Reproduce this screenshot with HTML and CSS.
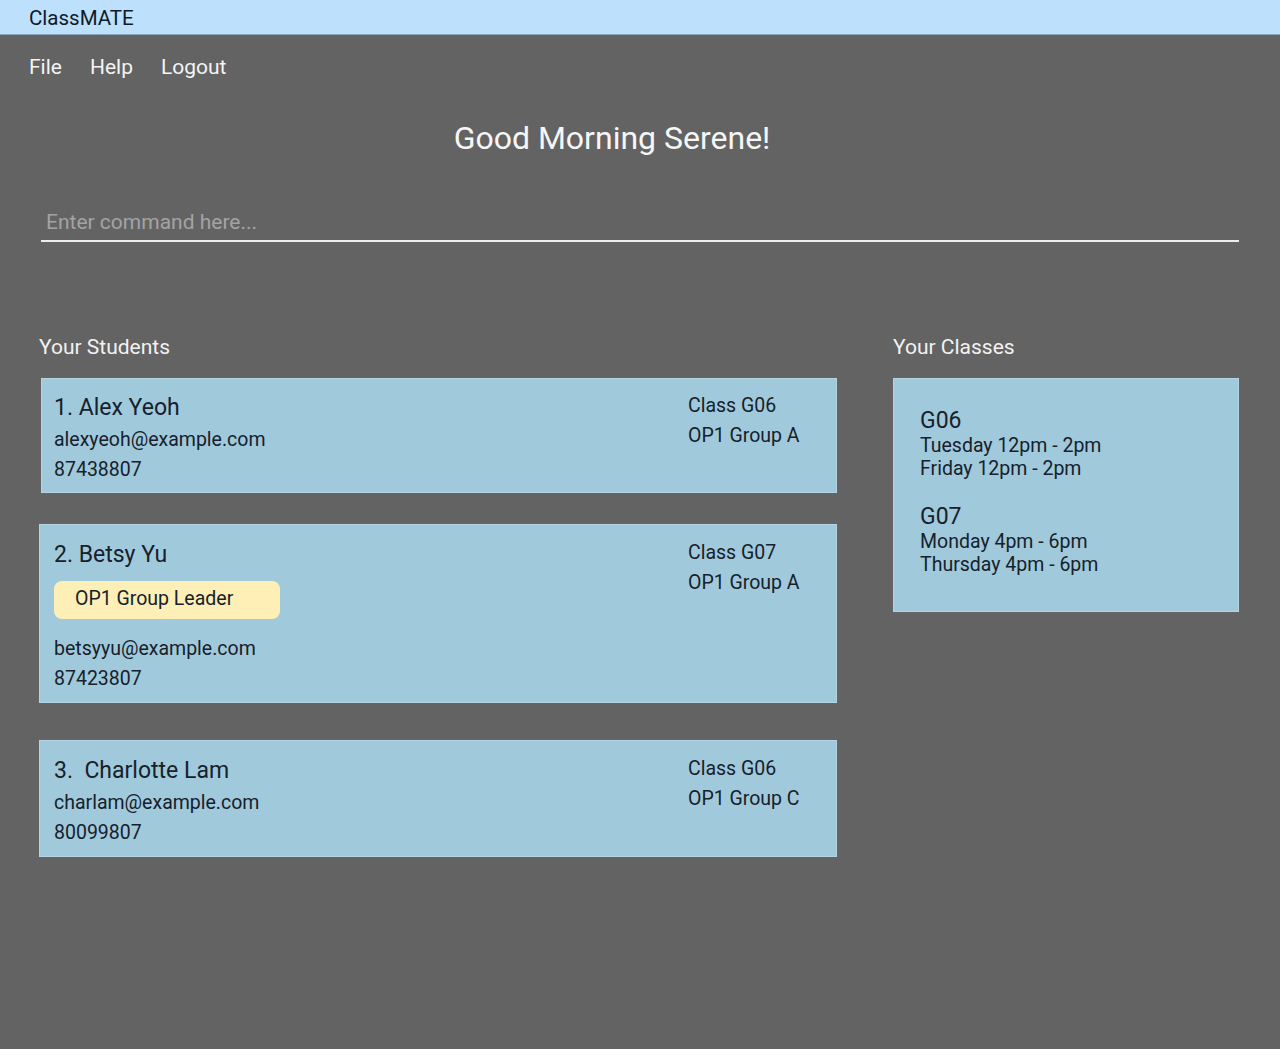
FILE: index.html
```html
<!DOCTYPE html>
<html>
<head>
    <title>ClassMATE</title>
    <meta charset="utf-8">
    <link rel="stylesheet" href="styles.css">
</head>
<body>
    <div class="title-bar">ClassMATE</div>

    <div class="menu">
        <span class="menu-item">File</span>
        <span class="menu-item">Help</span>
        <span class="menu-item">Logout</span>
    </div>

    <h1 class="greeting">Good Morning Serene!</h1>

    <div class="command-box">
        <input class="command-input" type="text" placeholder="Enter command here...">
    </div>

    <div class="content">
        <div class="students">
            <div class="section-label">Your Students</div>
            <div class="card-list">
                <div class="card first">
                    <div class="card-main">
                        <div class="name">1. Alex Yeoh</div>
                        <div class="line">alexyeoh@example.com</div>
                        <div class="line">87438807</div>
                    </div>
                    <div class="card-side">
                        <div class="line">Class G06</div>
                        <div class="line">OP1 Group A</div>
                    </div>
                </div>
                <div class="card">
                    <div class="card-main">
                        <div class="name">2. Betsy Yu</div>
                        <div class="tag">OP1 Group Leader</div>
                        <div class="line">betsyyu@example.com</div>
                        <div class="line">87423807</div>
                    </div>
                    <div class="card-side">
                        <div class="line">Class G07</div>
                        <div class="line">OP1 Group A</div>
                    </div>
                </div>
                <div class="card last">
                    <div class="card-main">
                        <div class="name">3.&nbsp; Charlotte Lam</div>
                        <div class="line">charlam@example.com</div>
                        <div class="line">80099807</div>
                    </div>
                    <div class="card-side">
                        <div class="line">Class G06</div>
                        <div class="line">OP1 Group C</div>
                    </div>
                </div>
            </div>
        </div>

        <div class="classes">
            <div class="section-label">Your Classes</div>
            <div class="class-card">
                <div class="class-group">
                    <div class="class-name">G06</div>
                    <div class="slot">Tuesday 12pm - 2pm</div>
                    <div class="slot">Friday 12pm - 2pm</div>
                </div>
                <div class="class-group">
                    <div class="class-name">G07</div>
                    <div class="slot">Monday 4pm - 6pm</div>
                    <div class="slot">Thursday 4pm - 6pm</div>
                </div>
            </div>
        </div>
    </div>
</body>
</html>
```

FILE: styles.css
```css
body {
    background-color: #636363;
    margin: 0;
    padding: 0;
    font-family: Roboto, "Liberation Sans", sans-serif;
    min-height: 1049px;
}

.title-bar {
    background: #bde0fd;
    height: 35px;
    line-height: 37px;
    padding-left: 29px;
    font-size: 20.5px;
    color: #0e1a26;
    box-sizing: border-box;
    border-bottom: 1px solid #8aa6bd;
}

.menu {
    display: flex;
    gap: 28px;
    padding: 20px 0 0 29px;
    font-size: 21px;
    line-height: 24px;
    color: #f4f4f4;
}

.greeting {
    margin: 41px 0 0;
    text-align: center;
    font-size: 32px;
    line-height: 36px;
    font-weight: normal;
    color: #f6f6f6;
    padding-right: 56px;
}

.command-box {
    margin: 54px 41px 0;
}

.command-input {
    display: block;
    width: 100%;
    box-sizing: border-box;
    background: transparent;
    border: none;
    border-bottom: 2px solid #eeeeee;
    padding: 0 0 6px 5px;
    font-family: Roboto, "Liberation Sans", sans-serif;
    font-size: 21px;
    line-height: 24px;
    color: #f0f0f0;
    outline: none;
}

.command-input::placeholder {
    color: #a3a3a3;
}

.content {
    display: flex;
    gap: 56px;
    padding: 93px 41px 0 39px;
}

.students {
    width: 798px;
}

.classes {
    width: 346px;
}

.section-label {
    font-size: 21px;
    line-height: 24px;
    color: #f2f2f2;
    margin-bottom: 19px;
}

.card-list {
    display: flex;
    flex-direction: column;
    gap: 31px;
}

.card {
    display: flex;
    justify-content: space-between;
    background: #a1c9dc;
    border: 1px solid #b3d4e3;
    padding: 15px 0 8px 14px;
    color: #16212b;
}

.card.first {
    margin-left: 2px;
    padding-left: 12px;
    padding-top: 14px;
    padding-bottom: 7px;
}

.card.last {
    margin-top: 6px;
}

.card-side {
    width: 148px;
    margin-top: -2px;
}

.name {
    font-size: 23px;
    line-height: 30px;
    margin-bottom: 2px;
}

.line {
    font-size: 19.5px;
    line-height: 30px;
}

.tag {
    background: #fdefb6;
    border-radius: 8px;
    width: 226px;
    box-sizing: border-box;
    height: 38px;
    line-height: 36px;
    padding-left: 21px;
    font-size: 19.5px;
    margin: 11px 0 15px;
}

.class-card {
    background: #a1c9dc;
    border: 1px solid #b3d4e3;
    padding: 29px 0 35px 26px;
    color: #16212b;
}

.class-group + .class-group {
    margin-top: 24px;
}

.class-name {
    font-size: 23px;
    line-height: 26px;
}

.slot {
    font-size: 19.5px;
    line-height: 23px;
}
```
